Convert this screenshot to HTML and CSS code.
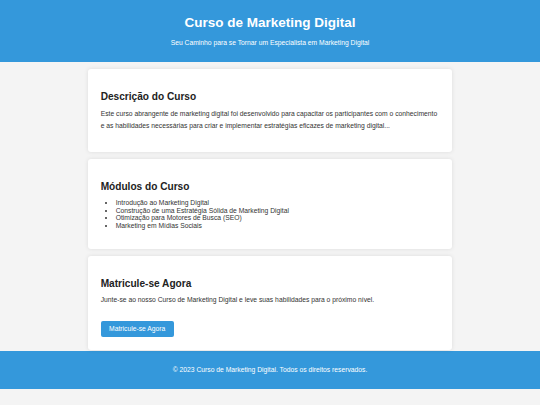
FILE: index.html
```html
<!DOCTYPE html>
<html lang="pt-BR">
<head>
<meta charset="utf-8">
<title>Curso de Marketing Digital</title>
<link rel="stylesheet" href="styles.css">
</head>
<body>
<header class="site-header">
  <h1 class="site-title">Curso de Marketing Digital</h1>
  <p class="site-tagline">Seu Caminho para se Tornar um Especialista em Marketing Digital</p>
</header>
<main class="content">
  <section class="card">
    <h2 class="card-title">Descrição do Curso</h2>
    <p class="card-text card-text--long">Este curso abrangente de marketing digital foi desenvolvido para capacitar os participantes com o conhecimento e as habilidades necessárias para criar e implementar estratégias eficazes de marketing digital...</p>
  </section>
  <section class="card">
    <h2 class="card-title">Módulos do Curso</h2>
    <ul class="module-list">
      <li>Introdução ao Marketing Digital</li>
      <li>Construção de uma Estratégia Sólida de Marketing Digital</li>
      <li>Otimização para Motores de Busca (SEO)</li>
      <li>Marketing em Mídias Sociais</li>
    </ul>
  </section>
  <section class="card">
    <h2 class="card-title">Matricule-se Agora</h2>
    <p class="card-text">Junte-se ao nosso Curso de Marketing Digital e leve suas habilidades para o próximo nível.</p>
    <div class="actions">
      <a class="btn" href="#">Matricule-se Agora</a>
    </div>
  </section>
</main>
<footer class="site-footer">
  <p class="footer-text">© 2023 Curso de Marketing Digital. Todos os direitos reservados.</p>
</footer>
</body>
</html>
```

FILE: styles.css
```css
* { box-sizing: border-box; }

html, body {
  margin: 0;
  padding: 0;
}

body {
  background: #f4f4f4;
  color: #333;
  font-family: "Liberation Sans", Arial, sans-serif;
  font-size: 6.75px;
}

.site-header {
  background: #3498db;
  color: #fff;
  text-align: center;
  padding: 15px 0 15px;
}

.site-title {
  margin: 0 0 8px;
  font-size: 13.5px;
  line-height: 16px;
  font-weight: bold;
}

.site-tagline {
  margin: 0;
  font-size: 6.75px;
  line-height: 8px;
}

.content {
  width: 364px;
  margin: 0 auto;
  padding: 7px 0 1px;
  display: flex;
  flex-direction: column;
  gap: 7px;
}

.card {
  background: #fff;
  border-radius: 3px;
  box-shadow: 0 0 4px rgba(0, 0, 0, 0.1);
  padding: 12.66px;
}

.card-title {
  margin: 9.4px 0 5px;
  font-size: 10.125px;
  line-height: 12px;
  font-weight: bold;
  color: #222;
}

.card-text {
  margin: 5.4px 0 6.75px;
  line-height: 7.76px;
}

.card-text--long {
  line-height: 12px;
}

.module-list {
  margin: 5.9px 0 6.75px;
  padding-left: 15px;
  line-height: 7.76px;
}

.actions {
  display: flex;
  margin-top: 17.8px;
}

.btn {
  display: block;
  background: #3498db;
  color: #fff;
  text-decoration: none;
  font-size: 6.75px;
  line-height: 7.76px;
  padding: 4px 8.4px;
  border-radius: 2px;
}

.site-footer {
  background: #3498db;
  color: #fff;
  text-align: center;
  padding: 8.4px 0;
}

.footer-text {
  margin: 6.75px 0;
  line-height: 7.76px;
}
```
